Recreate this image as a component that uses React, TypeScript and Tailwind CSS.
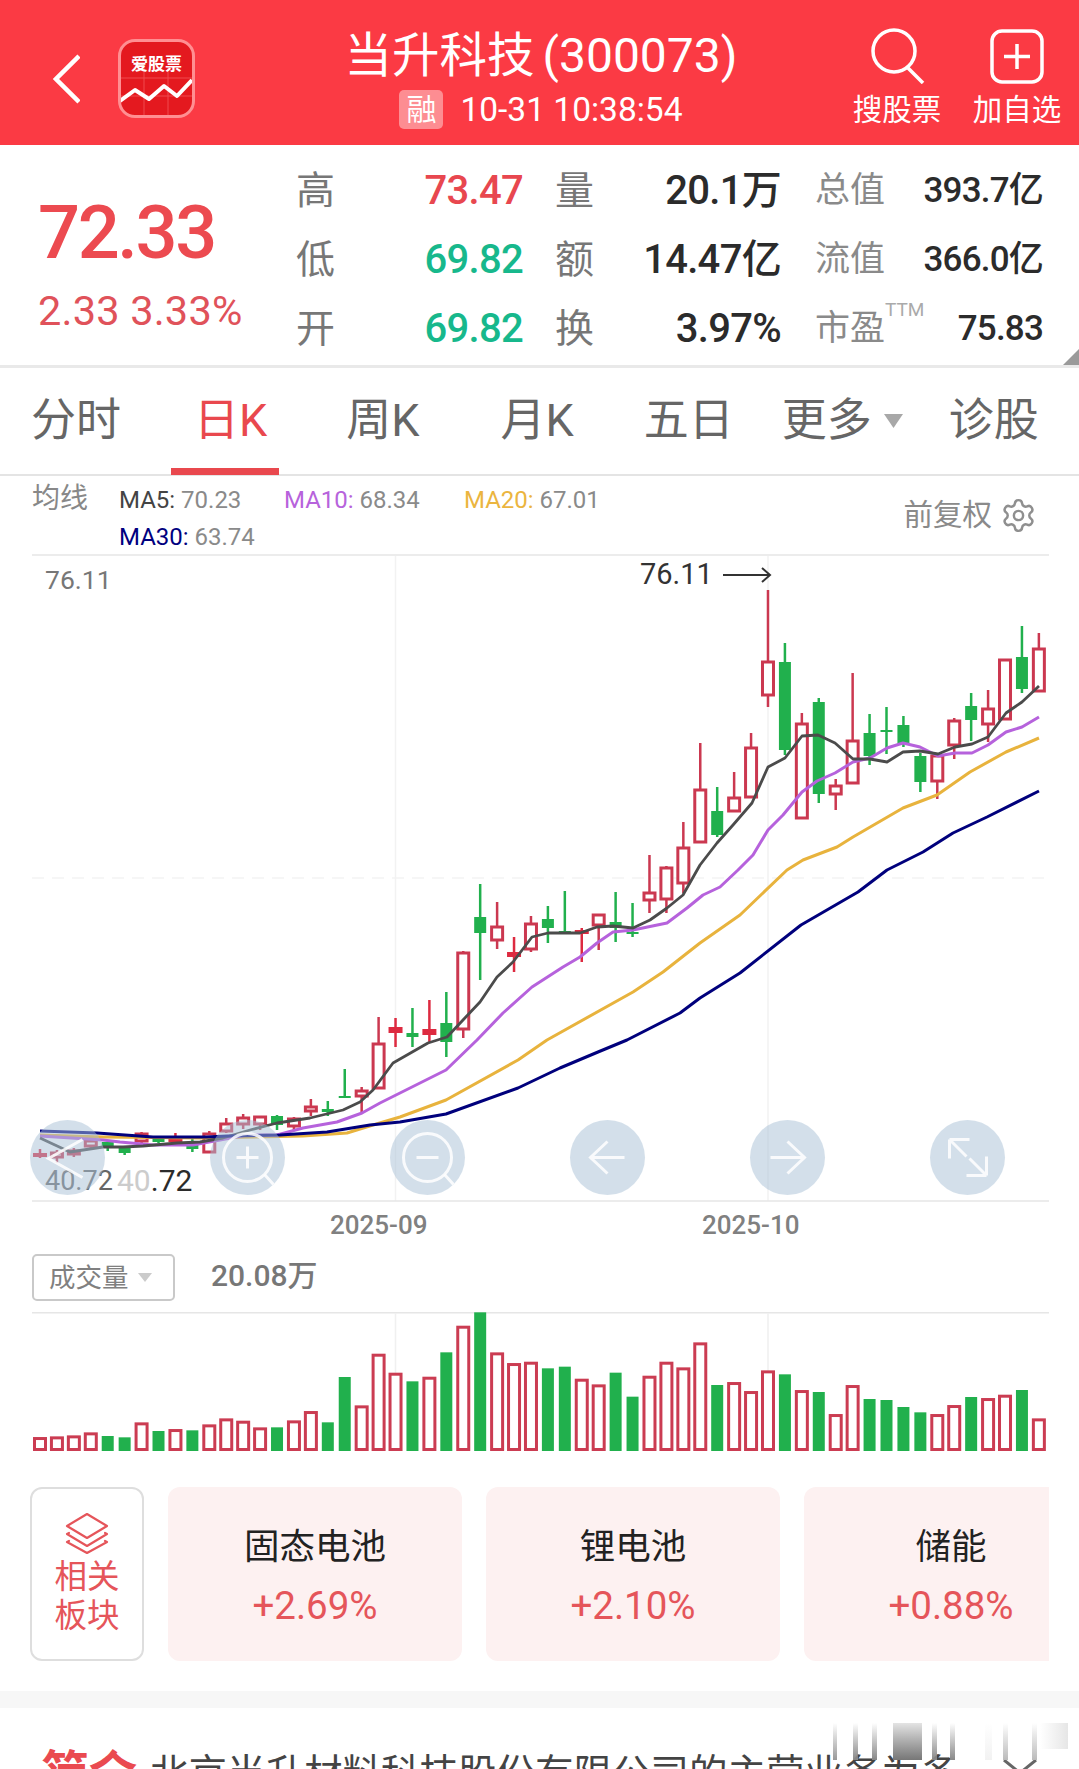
import { Settings } from "lucide-react";

type C = [string, number, number, number, number];
const candles: C[] = [
  ["f",1149,1153,1157,1158],["r",1150,1152,1158,1163],["r",1148,1150,1155,1157],["r",1138,1140,1147,1150],["g",1142,1142,1147,1151],["g",1147,1147,1153,1155],["r",1132,1133,1142,1144],["g",1136,1138,1142,1143],["f",1133,1138,1142,1143],["g",1136,1143,1149,1152],
  ["r",1131,1133,1153,1153],["r",1118,1123,1132,1133],["r",1114,1117,1125,1129],["r",1116,1116,1125,1130],["g",1115,1116,1125,1130],["r",1117,1118,1127,1130],["r",1099,1106,1112,1116],["g",1101,1109,1112,1116],["g",1069,1096,1097,1097],["r",1087,1090,1097,1112],
  ["r",1017,1043,1089,1089],["f",1018,1027,1033,1047],["g",1008,1033,1037,1047],["f",1000,1029,1035,1042],["g",992,1023,1042,1057],["r",951,952,1030,1038],["g",884,917,933,980],["r",902,926,941,949],["f",937,952,957,972],["r",916,923,950,952],
  ["g",906,919,928,943],["g",891,931,933,934],["f",928,930,934,962],["r",914,914,926,950],["g",892,922,928,942],["g",903,932,934,937],["r",855,892,901,913],["r",866,867,900,913],["r",822,847,884,893],["r",743,789,843,843],
  ["g",787,811,835,837],["r",772,797,812,812],["r",733,747,798,798],["r",590,661,696,707],["g",643,662,750,755],["r",713,723,819,819],["g",698,702,794,803],["r",779,785,795,810],["r",673,740,784,784],["g",714,733,756,765],
  ["g",707,730,732,754],["g",716,725,744,747],["g",753,756,782,792],["r",755,755,782,799],["r",718,720,746,759],["g",693,706,720,741],["r",690,708,725,742],["r",659,659,720,720],["g",626,657,689,693],["r",633,648,692,692],
];
const vols = [412,410,407,398,408,412,368,393,388,391,374,356,363,383,382,362,334,367,231,317,162,219,244,231,157,78,37,158,190,186,205,200,237,254,218,290,228,186,203,128,255,247,274,212,223,271,276,343,256,297,300,321,337,343,316,291,295,285,270,356];
const greenVol = new Set([4,5,7,9,14,17,18,22,24,26,30,31,34,35,40,44,46,49,50,51,52,55,58]);
const cx = (i: number) => 40 + i * 16.93;

const ma5 = "40,1138 70,1152 103,1147 123,1147 143,1146 177,1143 200,1142 223,1138 250,1130 277,1123 310,1118 343,1110 360,1102 373,1090 393,1063 428,1043 447,1037 463,1020 480,1002 497,977 513,962 532,937 548,933 580,933 597,927 613,926 633,928 650,920 667,908 683,895 700,865 717,843 733,825 752,803 768,767 785,758 802,736 818,735 835,743 853,759 870,759 887,762 903,752 920,751 938,754 955,747 972,744 988,737 1006,713 1022,702 1039,686";
const ma10 = "40,1136 103,1140 120,1142 153,1145 193,1145 220,1140 247,1135 277,1135 303,1128 337,1122 362,1113 380,1103 400,1093 446,1070 477,1040 503,1013 532,987 563,967 580,957 597,943 613,932 633,930 667,923 687,908 703,895 720,887 738,870 753,855 768,830 783,815 802,792 817,781 835,773 853,762 870,758 887,748 903,743 920,747 938,756 955,753 972,753 988,745 1006,732 1022,727 1039,717";
const ma20 = "40,1135 103,1137 200,1138 303,1136 347,1133 373,1125 400,1117 446,1100 518,1060 547,1040 633,992 663,972 700,943 740,915 787,870 803,860 837,847 853,837 903,808 937,795 970,772 1006,752 1039,738";
const ma30 = "40,1131 97,1133 153,1137 207,1137 227,1136 280,1135 327,1132 370,1125 400,1122 446,1114 518,1088 560,1068 598,1052 627,1040 680,1013 700,998 740,973 801,925 858,892 887,870 923,852 953,833 987,817 1039,791";

const stats = [
  { a: "高", v: "73.47", vc: "text-[#e8474f]", b: "量", w: "20.1万", c: "总值", x: "393.7亿" },
  { a: "低", v: "69.82", vc: "text-[#17b88c]", b: "额", w: "14.47亿", c: "流值", x: "366.0亿" },
  { a: "开", v: "69.82", vc: "text-[#17b88c]", b: "换", w: "3.97%", c: "市盈", x: "75.83", ttm: true },
];

const btns = [
  <path key="a" d="M15 -18 L-19 1 L15 20" />,
  <g key="b"><circle cx="0" cy="0" r="24" /><path d="M17 17 L26 27 M-11 0 H11 M0 -11 V11" /></g>,
  <g key="c"><circle cx="0" cy="0" r="24" /><path d="M17 17 L26 27 M-11 0 H11" /></g>,
  <path key="d" d="M17 0 H-17 M0 -16 L-17 0 L0 16" />,
  <path key="e" d="M-17 0 H17 M0 -16 L17 0 L0 16" />,
  <path key="f" d="M-18 -18 H2 M-18 -18 V1 M-18 -18 L-1 -1 M19 18 H-1 M19 18 V-1 M19 18 L2 1" />,
];

const sectors = [
  { n: "固态电池", p: "+2.69%" },
  { n: "锂电池", p: "+2.10%" },
  { n: "储能", p: "+0.88%" },
];

export default function App() {
  return (
    <div className="relative w-[1079px] h-[1769px] overflow-hidden bg-white font-['Roboto','Noto_Sans_CJK_SC',sans-serif] text-[#2b2b2b]">
      {/* header */}
      <header className="flex h-[145px] bg-[#fb3a44] text-white">
        <svg width="27" height="50" viewBox="0 0 27 50" className="ml-[53px] mt-[54px]" fill="none" stroke="#fff" strokeWidth="4.5" strokeLinejoin="miter">
          <path d="M26 2 L3 25 L26 48" />
        </svg>
        <div className="relative ml-[38px] mt-[39px] w-[77px] h-[79px] rounded-[17px] border-[3px] border-[#ff8f92] bg-[#e4191f] overflow-hidden">
          <svg width="71" height="73" viewBox="0 0 71 73" className="absolute left-0 top-0" fill="none">
            <path d="M0 36 H71 M0 54 H71 M23 24 V73 M47 24 V73" stroke="#f04a4e" strokeWidth="1" />
            <path d="M-1 59 L14 48 L28 57 L43 44 L56 54 L71 38" stroke="#fff" strokeWidth="4" strokeLinejoin="round" />
          </svg>
          <div className="absolute left-0 right-0 top-[11px] text-center text-[17px] leading-[22px] font-bold">爱股票</div>
        </div>
        <div className="ml-[125px] w-[442px] flex flex-col items-center">
          <div className="mt-[27px] flex items-center text-[47.5px] leading-[58px] whitespace-nowrap">
            <span>当升科技</span>
            <span className="ml-[8px] text-[48px]">(300073)</span>
          </div>
          <div className="mt-[5px] flex items-center">
            <span className="w-[44px] h-[39px] rounded-[5px] bg-[#fd8d92] text-center text-[30px] leading-[39px]">融</span>
            <span className="ml-[17px] text-[33.5px] leading-[39px] whitespace-nowrap">10-31 10:38:54</span>
          </div>
        </div>
        <div className="ml-[91px] w-[88px] flex flex-col items-center">
          <svg width="56" height="56" viewBox="0 0 56 56" className="mt-[28px]" fill="none" stroke="#fff" strokeWidth="3.5">
            <circle cx="25" cy="23" r="21" />
            <path d="M39 40 L54 55" />
          </svg>
          <div className="mt-[9px] text-[29.5px] leading-[34px] whitespace-nowrap">搜股票</div>
        </div>
        <div className="ml-[32px] w-[88px] flex flex-col items-center">
          <svg width="54" height="56" viewBox="0 0 54 56" className="mt-[28px]" fill="none" stroke="#fff" strokeWidth="3.5">
            <rect x="2" y="3" width="50" height="51" rx="10" />
            <path d="M27 16 V41 M14 28.5 H40" />
          </svg>
          <div className="mt-[9px] text-[29.5px] leading-[34px] whitespace-nowrap">加自选</div>
        </div>
      </header>

      {/* quote */}
      <section className="relative flex h-[223px] border-b-[3px] border-[#e9e9e9]">
        <div className="w-[296px] pl-[38px] text-[#ec4a50]">
          <div className="pt-[52px] text-[74px] leading-[72px] font-medium tracking-[-2.4px] whitespace-nowrap">72.33</div>
          <div className="mt-[22px] text-[41.5px] leading-[40px] tracking-[0.2px] text-[#e0525a] whitespace-nowrap">2.33 3.33%</div>
        </div>
        <div className="pt-[11px] grid grid-cols-[38px_189px_70px_188px_262px] grid-rows-[69px_69px_69px] items-center">
          {stats.map((s) => (
            <div key={s.a} className="contents">
              <span className="text-[39px] leading-[44px] text-[#777]">{s.a}</span>
              <span className={`text-right text-[40px] leading-[44px] font-medium tracking-[-0.7px] ${s.vc}`}>{s.v}</span>
              <span className="ml-[32px] text-[39px] leading-[44px] text-[#777] whitespace-nowrap">{s.b}</span>
              <span className="text-right text-[40px] leading-[44px] font-medium tracking-[-0.7px] whitespace-nowrap">{s.w}</span>
              <div className="ml-[34px] flex items-center justify-between">
                <span className="text-[35px] leading-[44px] text-[#8a8a8a] whitespace-nowrap">
                  {s.c}
                  {s.ttm && <sup className="text-[19px] leading-none text-[#aaa] align-[14px]">TTM</sup>}
                </span>
                <span className="text-[35px] leading-[44px] font-medium tracking-[-0.8px] whitespace-nowrap">{s.x}</span>
              </div>
            </div>
          ))}
        </div>
        <svg width="16" height="16" viewBox="0 0 16 16" className="absolute right-0 bottom-0">
          <path d="M16 0 V16 H0 Z" fill="#9a9a9a" />
        </svg>
      </section>

      {/* tabs */}
      <nav className="flex items-start h-[108px] border-b-2 border-[#e4e4e4] text-[45px] leading-[60px] text-[#666] whitespace-nowrap">
        <span className="ml-[31px] mt-[23px]">分时</span>
        <span className="relative ml-[73px] mt-[23px] text-[#e9484e]">
          日K
          <span className="absolute left-[-23px] top-[77px] w-[108px] h-[7px] bg-[#e9484e]" />
        </span>
        <span className="ml-[79px] mt-[23px]">周K</span>
        <span className="ml-[81px] mt-[23px]">月K</span>
        <span className="ml-[70px] mt-[23px]">五日</span>
        <span className="ml-[48px] mt-[23px]">更多</span>
        <svg width="19" height="14" viewBox="0 0 19 14" className="ml-[12px] mt-[46px]"><path d="M0 0 H19 L9.5 14 Z" fill="#a8a8a8" /></svg>
        <span className="ml-[46px] mt-[23px]">诊股</span>
      </nav>

      {/* legend */}
      <section className="flex h-[78px] pl-[32px] pr-[42px]">
        <span className="mt-[6px] w-[87px] text-[28px] leading-[34px] text-[#888]">均线</span>
        <div className="mt-[6px] grid grid-cols-[165px_180px_140px] grid-rows-[37px_37px] text-[24px] leading-[36px] text-[#8a8a8a] whitespace-nowrap">
          <span><span className="text-[#444]">MA5:</span> 70.23</span>
          <span><span className="text-[#b763dc]">MA10:</span> 68.34</span>
          <span><span className="text-[#ebb53f]">MA20:</span> 67.01</span>
          <span><span className="text-[#00007f]">MA30:</span> 63.74</span>
        </div>
        <div className="ml-auto mt-[21px] flex items-start text-[29.5px] leading-[36px] text-[#8a8a8a]">
          <span className="whitespace-nowrap">前复权</span>
          <Settings size={37} strokeWidth={1.6} className="ml-[8px] text-[#8f8f8f]" />
        </div>
      </section>

      {/* kline */}
      <section className="relative h-[648px]">
        <svg width="1079" height="648" viewBox="0 554 1079 648" className="block" fill="none">
          <path d="M32 555 H1049" stroke="#ececec" strokeWidth="2" />
          <path d="M32 878 H1049" stroke="#f3f3f3" strokeWidth="1.5" strokeDasharray="12 8" />
          <path d="M395.5 556 V1201 M768 556 V1201" stroke="#f2f2f2" strokeWidth="1.5" />
          <path d="M32 1201 H1049" stroke="#e6e6e6" strokeWidth="1.5" />
          {candles.map(([k, wt, bt, bb, wb], i) => {
            const x = cx(i);
            if (k === "g")
              return (
                <g key={i}>
                  <path d={`M${x} ${wt} V${wb}`} stroke="#21b04d" strokeWidth="2.5" />
                  <rect x={x - 6} y={bt} width="12" height={Math.max(bb - bt, 2)} fill="#21b04d" />
                </g>
              );
            if (k === "f")
              return (
                <g key={i}>
                  <path d={`M${x} ${wt} V${wb}`} stroke="#dd2a40" strokeWidth="2.5" />
                  <rect x={x - 7} y={bt} width="14" height={bb - bt} fill="#dd2a40" />
                </g>
              );
            return (
              <g key={i} stroke="#cb3850">
                <path d={`M${x} ${wt} V${bt} M${x} ${bb} V${wb}`} strokeWidth="2.5" />
                <rect x={x - 5.5} y={bt + 1} width="11" height={Math.max(bb - bt - 2, 1)} fill="#fff" strokeWidth="3" />
              </g>
            );
          })}
          <polyline points={ma20} stroke="#e8b33d" strokeWidth="3" strokeLinejoin="round" />
          <polyline points={ma10} stroke="#b662dc" strokeWidth="3" strokeLinejoin="round" />
          <polyline points={ma5} stroke="#4b4b4b" strokeWidth="2.8" strokeLinejoin="round" />
          <polyline points={ma30} stroke="#00007c" strokeWidth="3" strokeLinejoin="round" />
        </svg>
        <span className="absolute left-[45px] top-[10px] text-[26.5px] leading-[32px] text-[#777]">76.11</span>
        <span className="absolute left-[640px] top-[3px] text-[29px] leading-[34px] text-[#333]">76.11</span>
        <svg width="50" height="18" viewBox="0 0 50 18" className="absolute left-[723px] top-[12px]" fill="none" stroke="#333" strokeWidth="2">
          <path d="M0 9 H47 M39 2 L47 9 L39 16" />
        </svg>
        <span className="absolute left-[45px] top-[610px] text-[27px] leading-[34px] text-[#666]">40.72</span>
        <span className="absolute left-[117px] top-[610px] text-[30px] leading-[34px] text-[#2b2b2b]"><span className="text-[#ccc]">40</span>.72</span>
        <div className="absolute left-[30px] top-[566px] flex gap-[105px]">
          {btns.map((b, i) => (
            <div key={i} className="w-[75px] h-[75px] rounded-full bg-[#a7bfd5]/50">
              <svg width="75" height="75" viewBox="-37.5 -37.5 75 75" fill="none" stroke="#fff" strokeOpacity="0.85" strokeWidth="3">{b}</svg>
            </div>
          ))}
        </div>
        <span className="absolute left-[330px] top-[655px] text-[26px] leading-[32px] font-medium text-[#808080]">2025-09</span>
        <span className="absolute left-[702px] top-[655px] text-[26px] leading-[32px] font-medium text-[#808080]">2025-10</span>
      </section>

      {/* volume header */}
      <section className="flex items-start h-[110px] pl-[32px]">
        <div className="mt-[52px] w-[143px] h-[47px] flex items-center rounded-[5px] border-2 border-[#c9c9c9] pl-[15px]">
          <span className="text-[26.5px] leading-[32px] text-[#808080] whitespace-nowrap">成交量</span>
          <svg width="14" height="9" viewBox="0 0 14 9" className="ml-[9px]"><path d="M0 0 H14 L7 9 Z" fill="#cbcbcb" /></svg>
        </div>
        <span className="ml-[36px] mt-[56px] text-[30px] leading-[36px] font-medium text-[#777] whitespace-nowrap">20.08万</span>
      </section>

      {/* volume */}
      <svg width="1079" height="139" viewBox="0 1312 1079 139" className="block" fill="none">
        <path d="M32 1312.7 H1049" stroke="#e6e6e6" strokeWidth="1.5" />
        <path d="M395.5 1313 V1450 M768 1313 V1450" stroke="#f0f0f0" strokeWidth="1.5" />
        {vols.map((z, i) => {
          const top = 1300 + z / 3;
          const x = cx(i);
          return greenVol.has(i) ? (
            <rect key={i} x={x - 6} y={top} width="12" height={1451 - top} fill="#21b04d" />
          ) : (
            <rect key={i} x={x - 5.5} y={top + 1.2} width="11" height={1449.5 - top - 1.2} fill="#fff" stroke="#cb3c52" strokeWidth="3" />
          );
        })}
      </svg>

      {/* sectors */}
      <section className="h-[240px] pt-[36px] pl-[30px]">
        <div className="w-[1019px] flex items-start gap-[24px] overflow-hidden">
          <div className="shrink-0 w-[114px] h-[174px] rounded-[12px] border-2 border-[#dedede] flex flex-col items-center text-[#e5555a]">
            <svg width="46" height="42" viewBox="0 0 46 42" className="mt-[23px]" fill="none" stroke="#e5555a" strokeWidth="2.2" strokeLinejoin="round" strokeLinecap="round">
              <path d="M23 2 L43 14 L23 26 L3 14 Z" />
              <path d="M5 21 L3 22 L23 34 L43 22 L41 21" />
              <path d="M5 29 L3 30 L23 41 L43 30 L41 29" />
            </svg>
            <div className="mt-[4px] text-[32.5px] leading-[39px]">相关</div>
            <div className="text-[32.5px] leading-[39px]">板块</div>
          </div>
          {sectors.map((s) => (
            <div key={s.n} className="shrink-0 w-[294px] h-[174px] rounded-[12px] bg-[#fdf1f1] flex flex-col items-center">
              <div className="mt-[38px] text-[35.5px] leading-[44px] text-[#222]">{s.n}</div>
              <div className="mt-[15px] text-[38.5px] leading-[44px] text-[#e5555a]">{s.p}</div>
            </div>
          ))}
        </div>
      </section>

      {/* band */}
      <div className="h-[17px] bg-[#f7f7f7]" />

      {/* intro */}
      <section className="relative flex items-start pl-[41px] pt-[40px] whitespace-nowrap">
        <span className="text-[48px] leading-[52px] font-bold text-[#ea4a50]">简介</span>
        <span className="ml-[13px] text-[38.5px] leading-[52px] text-[#444]">北京当升材料科技股份有限公司的主营业务为多</span>
        <svg width="36" height="14" viewBox="0 0 36 14" className="absolute left-[1002px] top-[51px]" fill="none" stroke="#666" strokeWidth="3">
          <path d="M2 1 L18 14 L34 1" />
        </svg>
      </section>

      {/* watermark */}
      <div className="absolute left-[833px] top-[1723px] flex items-start h-[37px]">
        <div className="w-[4px] h-full bg-gradient-to-b from-transparent to-[#999]" />
        <div className="ml-[16px] w-[5px] h-full bg-gradient-to-b from-transparent to-[#888]" />
        <div className="ml-[14px] w-[5px] h-full bg-gradient-to-b from-transparent to-[#888]" />
        <div className="ml-[16px] w-[29px] h-full bg-gradient-to-b from-[#e4e4e4] to-[#777]" />
        <div className="ml-[10px] w-[5px] h-full bg-gradient-to-b from-transparent to-[#888]" />
        <div className="ml-[13px] w-[5px] h-full bg-gradient-to-b from-transparent to-[#888]" />
        <div className="ml-[30px] w-[7px] h-full bg-gradient-to-b from-transparent to-[#f2f2f2]" />
        <div className="ml-[11px] w-[5px] h-full bg-gradient-to-b from-transparent to-[#bbb]" />
        <div className="ml-[24px] w-[5px] h-full bg-gradient-to-b from-transparent to-[#bbb]" />
        <div className="ml-[3px] w-[28px] h-[26px] bg-gradient-to-r from-transparent to-[#e6e6e6]" />
      </div>
    </div>
  );
}
